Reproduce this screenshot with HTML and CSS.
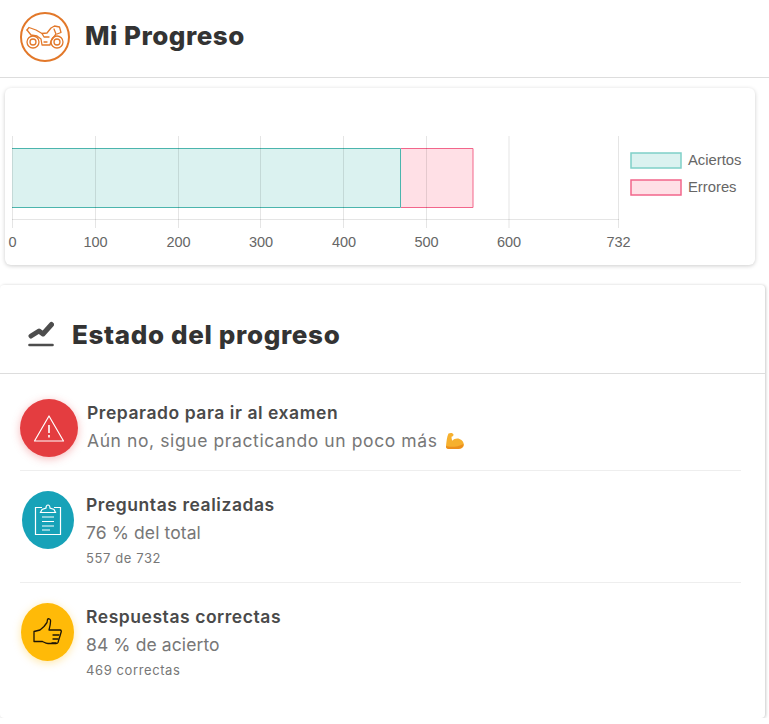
FILE: index.html
```html
<!DOCTYPE html>
<html>
<head>
  <meta charset="UTF-8">
  <title>Mi Progreso</title>
  <meta name="viewport" content="width=device-width, initial-scale=1">
  <link rel="stylesheet" href="styles.css">
</head>
<body>
  <header class="page-header">
    <svg class="logo" width="50" height="50" viewBox="0 0 50 50" fill="none" stroke="#e2782a" stroke-width="1.300" stroke-linejoin="round" stroke-linecap="round">
      <circle cx="25" cy="25" r="24" stroke-width="2"/>
      <circle cx="13" cy="30" r="6"/>
      <circle cx="13" cy="30" r="3"/>
      <circle cx="37" cy="30" r="6"/>
      <circle cx="37" cy="30" r="3"/>
      <path d="M7 18l2-2.500 7 2.500 6 3.500 5-.500 4-5 3.500-2 5 1 1.500 5.500-4 1.500"/>
      <path d="M7 18l4 5 6 1 4 3 1 6h8l1-4 5-7-2-5"/>
      <path d="M22 21.500l2 3.500 5 0M24 30h3"/>
    </svg>
    <h1 class="page-title">Mi Progreso</h1>
  </header>

  <section class="chart-card">
    <svg class="chart" width="750" height="177" viewBox="0 0 750 177">
      <rect class="bar-ok" x="7" y="60" width="388.5" height="59.5"/>
      <rect class="bar-bad" x="395.5" y="60" width="72.5" height="59.5"/>
      <path class="edge-ok" d="M7 60.500H395.500V119.500H7"/>
      <path class="edge-bad" d="M396 60.500H468V119.500H396"/>
      <g class="grid">
        <path d="M7.500 48V140M90.500 48V140M173.500 48V140M255.500 48V140M338.500 48V140M421.500 48V140M504 48V140M613.500 48V140"/>
        <path d="M7 131.500H614"/>
      </g>
      <g class="tick">
        <text x="7.500" y="159">0</text>
        <text x="90.500" y="159">100</text>
        <text x="173.500" y="159">200</text>
        <text x="256" y="159">300</text>
        <text x="339" y="159">400</text>
        <text x="421.500" y="159">500</text>
        <text x="504" y="159">600</text>
        <text x="613.500" y="159">732</text>
      </g>
      <rect class="legend-ok" x="626" y="65" width="50" height="15"/>
      <text class="legend-label" x="683" y="77">Aciertos</text>
      <rect class="legend-bad" x="626" y="92" width="50" height="15"/>
      <text class="legend-label" x="683" y="104">Errores</text>
    </svg>
  </section>

  <section class="status-card">
    <div class="status-head">
      <svg width="26" height="26" viewBox="0 0 26 26" fill="none" stroke="#4d4d4d" stroke-linecap="round" stroke-linejoin="round">
        <path d="M3 15l8-5 4 3 8.500-9.500" stroke-width="5"/>
        <path d="M1.500 24h23" stroke-width="2.600"/>
      </svg>
      <h2 class="status-title">Estado del progreso</h2>
    </div>

    <ul class="status-list">
      <li class="status-item">
        <div class="badge badge-red">
          <svg width="32" height="28" viewBox="0 0 32 28" fill="none" stroke="#fff" stroke-width="1.200" stroke-linejoin="round">
            <path d="M16 2L30.500 27H1.500Z"/>
            <path d="M16 11v8M16 21v2.500" stroke-width="1.600"/>
          </svg>
        </div>
        <div class="item-text">
          <div class="item-title">Preparado para ir al examen</div>
          <div class="item-value">Aún no, sigue practicando un poco más
            <svg class="flex-icon" width="20" height="18" viewBox="0 0 20 18">
              <path d="M3.500 1.500C6 .500 8 1 8.500 2.500 8.800 3.800 7.500 4.500 6.500 4.800 6.500 6.500 6.800 7.800 7.300 8.800 9 6.800 12 6 14.500 7 17.500 8 19 10.500 18.800 13 18.500 16 15.500 17 12 17H4C2 17 .800 16 1 14 1.500 10 1.800 5 3.500 1.500Z" fill="#f6b02e"/>
              <path d="M1 14c4 1.500 12 1 17.500-2C18.500 16 15.500 17 12 17H4C2 17 .800 16 1 14Z" fill="#ec8f1d"/>
            </svg>
          </div>
        </div>
      </li>
      <li class="status-item">
        <div class="badge badge-teal">
          <svg width="28" height="32" viewBox="0 0 28 32" fill="none" stroke="#fff" stroke-width="1.200">
            <path d="M8 3.500H1.500v27h25v-27H20"/>
            <path d="M6.500 8.500h15l-1.500-3-4-1.500c0-4-4-4-4 0L8 5.500Z"/>
            <path d="M8 13h12M8 17.500h12M8 22h12M8 26h8"/>
          </svg>
        </div>
        <div class="item-text">
          <div class="item-title">Preguntas realizadas</div>
          <div class="item-value item-value-short">76 % del total</div>
          <div class="item-note">557 de 732</div>
        </div>
      </li>
      <li class="status-item">
        <div class="badge badge-yellow">
          <svg width="30" height="29" viewBox="0 0 30 29" fill="none" stroke="#1c1408" stroke-width="1.300" stroke-linejoin="round" stroke-linecap="round">
            <path d="M1 13.500l6-1.500 4-3.500 3-4 .500-3c.500-1.200 2.800-1 3 .800.300 2.700-.500 6-1.500 9.700h11c1.500 0 1.500 1.800 1 2.500l-1 3.500-1 3-1 3.500c-.300.700-1 1-2 1h-8c-2 0-3.500-1-5.500-2H1Z"/>
            <path d="M20 17h6M20 21h5M19 25h4"/>
          </svg>
        </div>
        <div class="item-text">
          <div class="item-title">Respuestas correctas</div>
          <div class="item-value item-value-short">84 % de acierto</div>
          <div class="item-note">469 correctas</div>
        </div>
      </li>
    </ul>
  </section>
</body>
</html>
```

FILE: styles.css
```css
body {
  margin: 0;
  background-color: white;
  color: #333;
  font-family: 'Inter', 'Open Sans', sans-serif;
  overflow: hidden;
}
.page-header {
  display: flex;
  align-items: center;
  gap: 15px;
  height: 74px;
  padding-left: 20px;
  padding-bottom: 3px;
  border-bottom: 1px solid #ddd;
}
.page-title {
  margin: 0 0 4px 0;
  font-size: 26px;
  font-weight: 800;
  letter-spacing: 0.500px;
  color: #333;
}
.chart-card {
  width: 750px;
  height: 177px;
  margin: 10px 0 20px 5px;
  background-color: white;
  border-radius: 6px;
  box-shadow: 0 1px 4px rgba(0, 0, 0, 0.2);
}
.chart {
  display: block;
}
.bar-ok {
  fill: #dbf2f0;
}
.bar-bad {
  fill: #ffe0e6;
}
.edge-ok {
  fill: none;
  stroke: #4bb5ad;
}
.edge-bad {
  fill: none;
  stroke: #f2668b;
}
.grid path {
  fill: none;
  stroke: rgba(0, 0, 0, 0.1);
}
.tick text {
  font-family: 'Liberation Sans', sans-serif;
  font-size: 14.500px;
  fill: #666;
  text-anchor: middle;
}
.legend-ok {
  fill: #dbf2f0;
  stroke: #7fd0c8;
  stroke-width: 1.500;
}
.legend-bad {
  fill: #ffe0e6;
  stroke: #f2668b;
  stroke-width: 1.500;
}
.legend-label {
  font-family: 'Liberation Sans', sans-serif;
  font-size: 14.800px;
  fill: #666;
}
.status-card {
  width: 765px;
  height: 433px;
  background-color: white;
  border-radius: 4px;
  box-shadow: 1px 0 3px rgba(0, 0, 0, 0.18), 0 3px 4px rgba(0, 0, 0, 0.05);
}
.status-head {
  display: flex;
  align-items: center;
  gap: 18px;
  height: 78px;
  padding: 10px 0 0 28px;
  border-bottom: 1px solid #ddd;
}
.status-title {
  margin: 0;
  font-size: 26px;
  font-weight: 800;
  letter-spacing: 0.650px;
  color: #333;
}
.status-list {
  list-style: none;
  margin: 0 24px 0 20px;
  padding: 5px 0 0 0;
}
.status-item {
  display: flex;
  align-items: flex-start;
  padding: 20px 0 13px 0;
  border-bottom: 1px solid #eee;
}
.status-item:last-child {
  border-bottom: none;
}
.badge {
  display: flex;
  align-items: center;
  justify-content: center;
  flex-shrink: 0;
  height: 58px;
  border-radius: 50%;
}
.badge-red {
  width: 58px;
  margin-right: 9px;
  background-color: #e43d40;
  box-shadow: 0 2px 8px rgba(228, 61, 64, 0.35);
}
.badge-teal {
  width: 52px;
  margin: 0 12px 0 2px;
  background-color: #17a2b8;
}
.badge-yellow {
  width: 53px;
  margin: 0 12px 0 1px;
  background-color: #ffba08;
  box-shadow: 0 2px 8px rgba(255, 186, 8, 0.35);
}
.item-title {
  font-size: 17.500px;
  line-height: 28px;
  font-weight: 600;
  letter-spacing: 0.550px;
  color: #4a4a4a;
}
.item-value {
  font-size: 17.500px;
  line-height: 28px;
  letter-spacing: 0.600px;
  color: #777;
}
.item-value-short {
  letter-spacing: 0.100px;
}
.item-note {
  font-size: 13px;
  line-height: 22px;
  letter-spacing: 0.600px;
  color: #777;
}
.flex-icon {
  vertical-align: -3px;
  margin-left: 2px;
}
```
